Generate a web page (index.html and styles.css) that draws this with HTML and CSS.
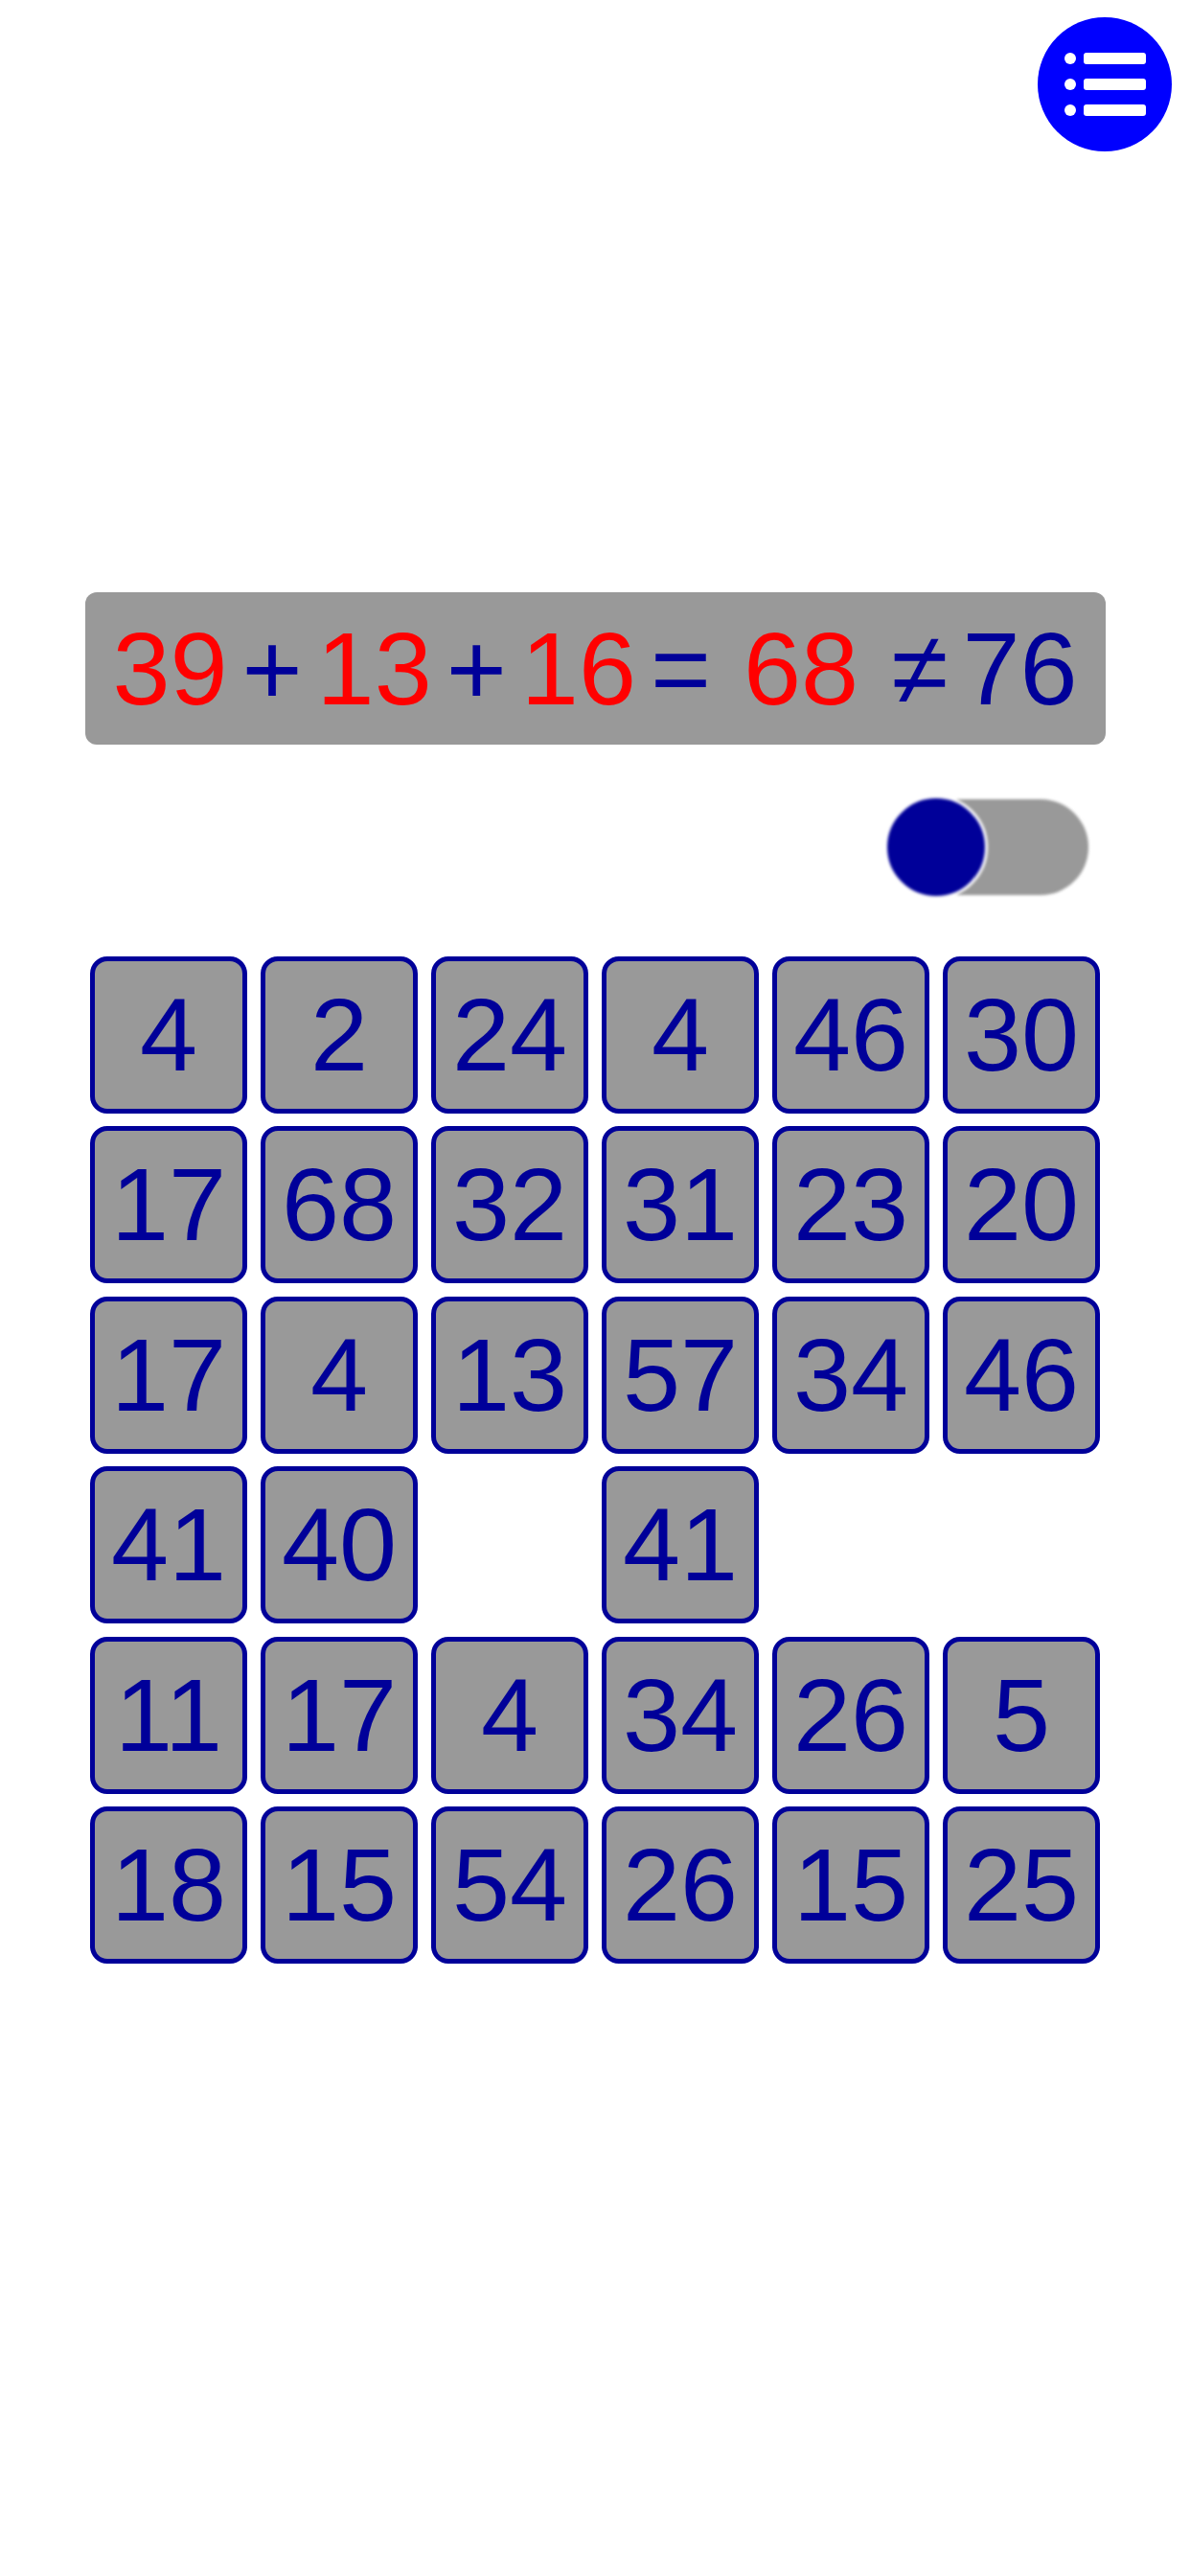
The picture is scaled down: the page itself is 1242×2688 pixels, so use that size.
FILE: index.html
```html
<!DOCTYPE html>
<html>
	<head>
		<meta charset="UTF-8">
		<title>Sum</title>
		<link rel="stylesheet" href="styles.css">
	</head>
	<body>
		<header class="top">
			<a href="javascript:;" class="menu-btn">
				<svg width="140" height="140" viewBox="-70 -70 140 140">
					<circle cx="0" cy="0" r="70" fill="#0000ff"/>
					<circle cx="-36" cy="-27" r="6" fill="#fff"/>
					<circle cx="-36" cy="0" r="6" fill="#fff"/>
					<circle cx="-36" cy="27" r="6" fill="#fff"/>
					<rect x="-22" y="-33" width="65" height="12" rx="3" fill="#fff"/>
					<rect x="-22" y="-6" width="65" height="12" rx="3" fill="#fff"/>
					<rect x="-22" y="21" width="65" height="12" rx="3" fill="#fff"/>
				</svg>
			</a>
		</header>

		<section class="equation">
			<span class="num">39</span>
			<span class="op">+</span>
			<span class="num">13</span>
			<span class="op">+</span>
			<span class="num">16</span>
			<span class="op">=</span>
			<span class="num wide">68</span>
			<span class="op wide">&ne;</span>
			<span class="target">76</span>
		</section>

		<div class="toggle-row">
			<div class="toggle">
				<div class="track"></div>
				<div class="knob"></div>
			</div>
		</div>

		<ul class="grid">
			<li>4</li><li>2</li><li>24</li><li>4</li><li>46</li><li>30</li>
			<li>17</li><li>68</li><li>32</li><li>31</li><li>23</li><li>20</li>
			<li>17</li><li>4</li><li>13</li><li>57</li><li>34</li><li>46</li>
			<li>41</li><li>40</li><li class="empty"></li><li>41</li><li class="empty"></li><li class="empty"></li>
			<li>11</li><li>17</li><li>4</li><li>34</li><li>26</li><li>5</li>
			<li>18</li><li>15</li><li>54</li><li>26</li><li>15</li><li>25</li>
		</ul>
	</body>
</html>
```

FILE: styles.css
```css
body{
	margin: 0;
	width: 1242px;
	background: #fff;
	font-family: "Liberation Sans", Arial, sans-serif;
}
a{
	text-decoration: none;
}
ul{
	padding: 0;
	margin: 0;
	list-style: none;
}
.top{
	display: flex;
	justify-content: flex-end;
	padding: 18px 19px 0 0;
	height: 140px;
}
.menu-btn svg{
	display: block;
}

.equation{
	width: 1065px;
	height: 159px;
	margin: 460px auto 0;
	background: #999;
	border-radius: 12px;
	display: flex;
	align-items: center;
	justify-content: center;
	font-size: 108px;
	line-height: 1;
}
.equation span{
	margin-left: 15px;
}
.equation span:first-child{
	margin-left: 0;
}
.equation .wide{
	margin-left: 34px;
}
.num{
	color: #ff0000;
}
.op,.target{
	color: #000099;
}

.toggle-row{
	width: 1064px;
	margin: 53px auto 0;
	display: flex;
	justify-content: flex-end;
}
.toggle{
	position: relative;
	width: 213px;
	height: 108px;
	margin-right: 17px;
	filter: blur(1.5px);
}
.track{
	position: absolute;
	left: 10px;
	right: 0;
	top: 4px;
	height: 100px;
	border-radius: 50px;
	background: #999;
}
.knob{
	position: absolute;
	left: 0;
	top: 0;
	width: 102px;
	height: 102px;
	border: 3px solid #fff;
	border-radius: 50%;
	background: #000099;
}

.grid{
	width: 1054px;
	margin: 60px auto 0;
	display: grid;
	grid-template-columns: repeat(6, 164px);
	grid-auto-rows: 164px;
	column-gap: 14px;
	row-gap: 13.4px;
}
.grid li{
	box-sizing: border-box;
	border: 5px solid #000099;
	border-radius: 18px;
	background: #999;
	color: #000099;
	font-size: 108px;
	line-height: 1;
	display: flex;
	align-items: center;
	justify-content: center;
}
.grid li.empty{
	border: none;
	background: none;
}
```
